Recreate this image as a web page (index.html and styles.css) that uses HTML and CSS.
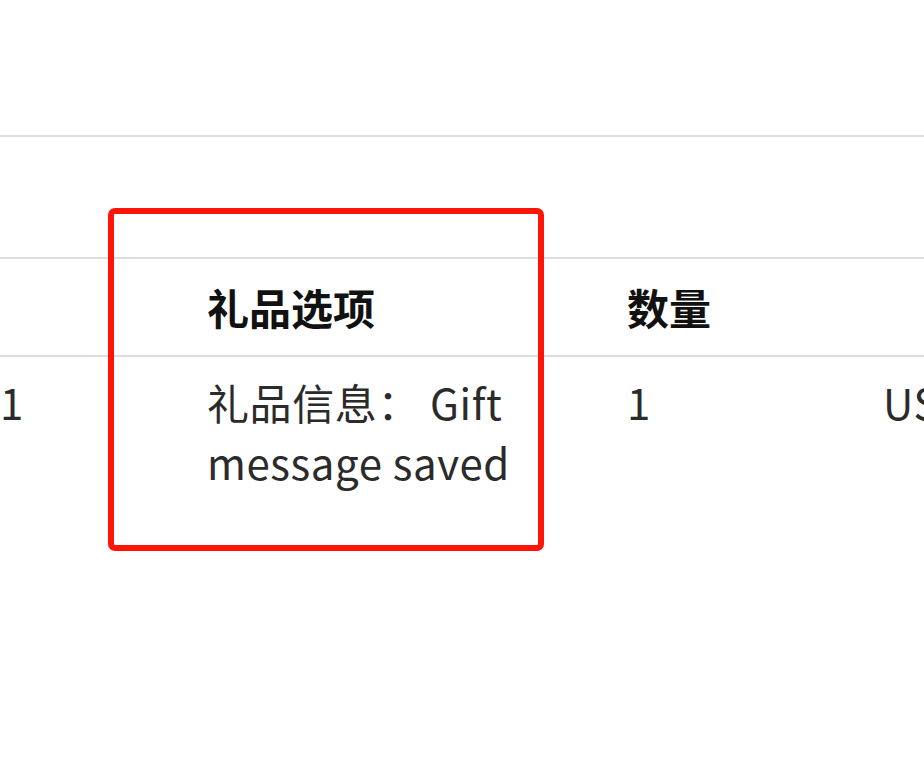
FILE: index.html
```html
<!doctype html>
<html lang="zh-CN">
<head>
<meta charset="utf-8">
<title>订单商品</title>
<link rel="stylesheet" href="styles.css">
</head>
<body>
  <div class="page">
    <table class="items">
      <colgroup>
        <col class="c-sku">
        <col class="c-gift">
        <col class="c-qty">
        <col class="c-price">
      </colgroup>
      <thead>
        <tr class="spacer"><td colspan="4"></td></tr>
        <tr class="head">
          <th></th>
          <th>礼品选项</th>
          <th>数量</th>
          <th></th>
        </tr>
      </thead>
      <tbody>
        <tr>
          <td>1</td>
          <td>礼品信息：&nbsp;Gift message saved</td>
          <td>1</td>
          <td>US$</td>
        </tr>
      </tbody>
    </table>
    <div class="mark"></div>
  </div>
</body>
</html>
```

FILE: styles.css
```css
* {
  box-sizing: border-box;
}

body {
  margin: 0;
  background: #fff;
  color: #222;
  font-family: "Noto Sans CJK SC", "Noto Sans", sans-serif;
  font-size: 42px;
  line-height: 60px;
  overflow: hidden;
}

.page {
  position: relative;
  width: 924px;
  height: 760px;
  padding-top: 135px;
  overflow: hidden;
}

.items {
  border-collapse: collapse;
  table-layout: fixed;
  width: 1200px;
}

.c-sku { width: 207px; }
.c-gift { width: 420px; }
.c-qty { width: 256px; }
.c-price { width: 317px; }

.items tr {
  border-top: 2px solid #dcdede;
}

.items th,
.items td {
  padding: 0 100px 0 0;
  text-align: left;
  vertical-align: top;
}

.spacer td {
  height: 122px;
}

.head th {
  height: 98px;
  vertical-align: middle;
  font-weight: 700;
  color: #111;
}

.items tbody td {
  padding-top: 15px;
  color: #2b2b2b;
  letter-spacing: 0.6px;
}

.mark {
  position: absolute;
  left: 108px;
  top: 208px;
  width: 436px;
  height: 343px;
  border: 6px solid #ff1408;
  border-radius: 7px;
}
```
